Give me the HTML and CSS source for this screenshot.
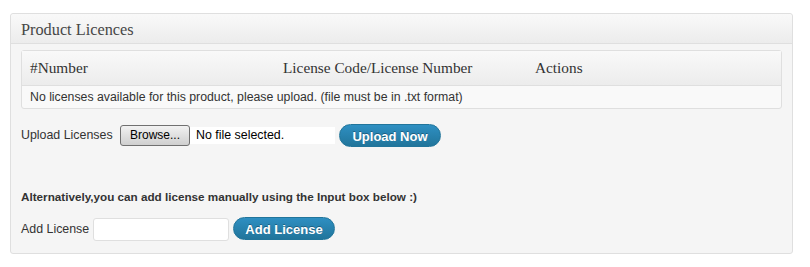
FILE: index.html
```html
<!DOCTYPE html>
<html>
<head>
<meta charset="utf-8">
<link rel="stylesheet" href="styles.css">
</head>
<body>
<div class="box">
  <div class="box-head">Product Licences</div>
  <div class="box-body">
    <div class="table">
      <div class="thead">
        <span class="th th-num">#Number</span>
        <span class="th th-code">License Code/License Number</span>
        <span class="th th-act">Actions</span>
      </div>
      <div class="trow">No licenses available for this product, please upload. (file must be in .txt format)</div>
    </div>
    <div class="upload-row">
      <span class="label label-upload">Upload Licenses</span>
      <span class="file">
        <span class="browse">Browse...</span>
        <span class="file-name">No file selected.</span>
      </span>
      <span class="btn btn-upload">Upload Now</span>
    </div>
    <div class="alt">Alternatively,you can add license manually using the Input box below :)</div>
    <div class="add-row">
      <span class="label label-add">Add License</span>
      <span class="input"></span>
      <span class="btn btn-add">Add License</span>
    </div>
  </div>
</div>
</body>
</html>
```

FILE: styles.css
```css
body {
  margin: 0;
  background: #fff;
  font-family: "Liberation Sans", Arial, sans-serif;
  font-size: 12px;
  color: #333;
}
.box {
  margin: 13px 0 0 10px;
  width: 781px;
  height: 239px;
  border: 1px solid #dfdfdf;
  border-radius: 3px;
  background: #f5f5f5;
  box-sizing: content-box;
}
.box-head {
  height: 29px;
  border-bottom: 1px solid #dfdfdf;
  background: linear-gradient(#f9f9f9, #ececec);
  font-family: "Liberation Serif", Georgia, serif;
  font-size: 16.3px;
  color: #464646;
  line-height: 31px;
  padding-left: 10px;
  border-radius: 3px 3px 0 0;
}
.box-body {
  padding: 6px 10px 0 10px;
}
.table {
  border: 1px solid #dfdfdf;
  border-radius: 3px;
  background: #f9f9f9;
}
.thead {
  height: 34px;
  display: flex;
  align-items: center;
  background: linear-gradient(#f9f9f9, #ececec);
  border-bottom: 1px solid #dfdfdf;
  font-family: "Liberation Serif", Georgia, serif;
  font-size: 15.3px;
  color: #333;
}
.th-num { padding-left: 8px; width: 253px; }
.th-code { width: 252px; }
.trow {
  height: 22px;
  line-height: 22px;
  padding-left: 8px;
  color: #333;
  font-size: 12.3px;
}
.upload-row {
  margin-top: 14px;
  height: 24px;
  display: flex;
  align-items: center;
}
.label { font-size: 12.4px; }
.label-upload { width: 99px; }
.label-add { width: 72px; align-self: center; }
.file { display: flex; align-items: center; }
.browse {
  width: 68px;
  height: 19px;
  border: 1px solid #707070;
  border-radius: 3px;
  background: linear-gradient(#f2f2f2, #e0e0e0 50%, #cfcfcf);
  color: #000;
  text-align: center;
  line-height: 19px;
  box-sizing: content-box;
}
.file-name {
  width: 139px;
  background: #fff;
  color: #000;
  height: 17px;
  line-height: 17px;
  padding-left: 6px;
  font-size: 12.4px;
}
.btn {
  height: 23px;
  line-height: 23px;
  border-radius: 12px;
  border: 1px solid #21759b;
  background: linear-gradient(#2e8fc2, #21759b);
  color: #fff;
  font-weight: bold;
  font-size: 13px;
  text-align: center;
  box-sizing: border-box;
  text-shadow: 0 -1px 0 rgba(0,0,0,0.3);
}
.btn-upload { width: 102px; margin-left: 4px; }
.alt {
  margin-top: 43px;
  font-weight: bold;
  color: #333;
  font-size: 11.7px;
}
.add-row {
  margin-top: 14px;
  display: flex;
  align-items: flex-start;
}
.input {
  width: 136px;
  height: 23px;
  box-sizing: border-box;
  border: 1px solid #dfdfdf;
  border-radius: 3px;
  background: #fff;
  margin-top: 1px;
}
.btn-add { width: 102px; margin-left: 4px; }
```
